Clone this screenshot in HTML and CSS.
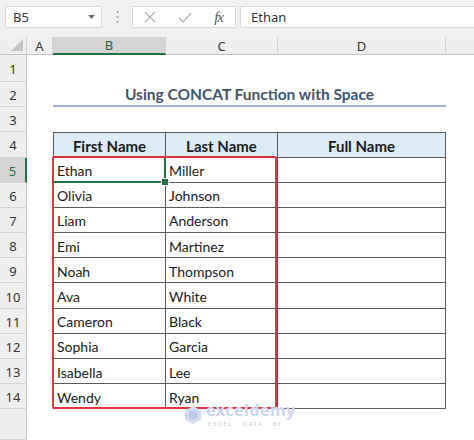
FILE: index.html
```html
<!DOCTYPE html>
<html lang="en">

<head>
    <meta charset="UTF-8">
    <meta name="viewport" content="width=device-width, initial-scale=1.0">
    <title>Using CONCAT Function with Space</title>
    <link rel="stylesheet" href="styles.css">
</head>

<body>
    <div class="toolbar">
        <div class="name-box">
            <span>B5</span>
            <svg class="caret" width="7" height="4" viewBox="0 0 7 4"><path d="M0 0h7L3.5 4z" fill="#6b6b6b"/></svg>
        </div>
        <div class="grip">
            <svg width="3" height="14" viewBox="0 0 3 14">
                <circle cx="1.5" cy="2" r="1" fill="#9a9a9a"/>
                <circle cx="1.5" cy="7" r="1" fill="#9a9a9a"/>
                <circle cx="1.5" cy="12" r="1" fill="#9a9a9a"/>
            </svg>
        </div>
        <div class="fx-box">
            <svg width="12" height="12" viewBox="0 0 12 12"><path d="M1 1l10 10M11 1L1 11" stroke="#b3b3b3" stroke-width="1.2" fill="none"/></svg>
            <svg width="14" height="11" viewBox="0 0 14 11"><path d="M1 6l4 4 8-9" stroke="#b3b3b3" stroke-width="1.3" fill="none"/></svg>
            <span class="fx">fx</span>
        </div>
        <div class="formula">Ethan</div>
    </div>

    <div class="sheet">
        <!-- column headers -->
        <div class="corner">
            <svg width="12" height="12" viewBox="0 0 12 12"><path d="M12 0v12H0z" fill="#c3c3c3"/></svg>
        </div>
        <div class="col-head">A</div>
        <div class="col-head active">B</div>
        <div class="col-head">C</div>
        <div class="col-head">D</div>
        <div class="col-head last"></div>

        <!-- row 1 -->
        <div class="row-head">1</div>
        <div class="blank wide"></div>

        <!-- row 2 -->
        <div class="row-head">2</div>
        <div class="blank"></div>
        <div class="title">Using CONCAT Function with Space</div>
        <div class="blank"></div>

        <!-- row 3 -->
        <div class="row-head">3</div>
        <div class="blank wide"></div>

        <!-- row 4 -->
        <div class="row-head">4</div>
        <div class="blank"></div>
        <div class="cell head first">First Name</div>
        <div class="cell head">Last Name</div>
        <div class="cell head">Full Name</div>
        <div class="blank"></div>

        <div class="row-head active">5</div>
        <div class="blank"></div>
        <div class="cell first selected">Ethan</div>
        <div class="cell">Miller</div>
        <div class="cell"></div>
        <div class="blank"></div>

        <div class="row-head">6</div>
        <div class="blank"></div>
        <div class="cell first">Olivia</div>
        <div class="cell">Johnson</div>
        <div class="cell"></div>
        <div class="blank"></div>

        <div class="row-head">7</div>
        <div class="blank"></div>
        <div class="cell first">Liam</div>
        <div class="cell">Anderson</div>
        <div class="cell"></div>
        <div class="blank"></div>

        <div class="row-head">8</div>
        <div class="blank"></div>
        <div class="cell first">Emi</div>
        <div class="cell">Martinez</div>
        <div class="cell"></div>
        <div class="blank"></div>

        <div class="row-head">9</div>
        <div class="blank"></div>
        <div class="cell first">Noah</div>
        <div class="cell">Thompson</div>
        <div class="cell"></div>
        <div class="blank"></div>

        <div class="row-head">10</div>
        <div class="blank"></div>
        <div class="cell first">Ava</div>
        <div class="cell">White</div>
        <div class="cell"></div>
        <div class="blank"></div>

        <div class="row-head">11</div>
        <div class="blank"></div>
        <div class="cell first">Cameron</div>
        <div class="cell">Black</div>
        <div class="cell"></div>
        <div class="blank"></div>

        <div class="row-head">12</div>
        <div class="blank"></div>
        <div class="cell first">Sophia</div>
        <div class="cell">Garcia</div>
        <div class="cell"></div>
        <div class="blank"></div>

        <div class="row-head">13</div>
        <div class="blank"></div>
        <div class="cell first">Isabella</div>
        <div class="cell">Lee</div>
        <div class="cell"></div>
        <div class="blank"></div>

        <div class="row-head">14</div>
        <div class="blank"></div>
        <div class="cell first">Wendy</div>
        <div class="cell">Ryan</div>
        <div class="cell"></div>
        <div class="blank"></div>

        <div class="row-head"></div>
        <div class="blank wide"></div>

        <!-- red frame over B5:C14 -->
        <div class="highlight"></div>

        <div class="watermark">
            <svg width="20" height="20" viewBox="0 0 20 20">
                <path d="M10 1l8 4.5v9L10 19l-8-4.5v-9z" fill="#d3dbef"/>
                <path d="M10 5l4.5 2.5v5L10 15l-4.5-2.5v-5z" fill="#bcc8e6"/>
            </svg>
            <div class="wm-text">
                <div class="wm-name">exceldemy</div>
                <div class="wm-sub">EXCEL · DATA · BI</div>
            </div>
        </div>
    </div>
</body>

</html>
```

FILE: styles.css
```css
* {
    margin: 0;
    padding: 0;
    box-sizing: border-box;
}

body {
    width: 474px;
    height: 440px;
    overflow: hidden;
    background-color: #fff;
    font-family: 'Lato', 'Noto Sans', sans-serif;
    color: #222;
}

/* formula bar */
.toolbar {
    display: flex;
    align-items: center;
    height: 37px;
    padding: 6px 0 9px 5px;
    background-color: #f1f1f1;
}

.name-box {
    width: 97px;
    height: 22px;
    display: flex;
    align-items: center;
    justify-content: space-between;
    padding: 0 6px 0 7px;
    background-color: #fff;
    border: 1px solid #dadada;
    font-family: 'Noto Sans', sans-serif;
    font-size: 13px;
    color: #333;
}

.grip {
    width: 30px;
    display: flex;
    justify-content: center;
}

.fx-box {
    width: 104px;
    height: 22px;
    display: flex;
    align-items: center;
    justify-content: space-between;
    padding: 0 12px 0 11px;
    background-color: #fff;
    border: 1px solid #dadada;
}

.fx {
    font-family: 'Liberation Serif', serif;
    font-style: italic;
    font-size: 15px;
    color: #555;
    letter-spacing: -1px;
}

.formula {
    flex: 1;
    height: 22px;
    margin-left: 4px;
    padding-left: 10px;
    background-color: #fff;
    border: 1px solid #dadada;
    border-right: none;
    font-family: 'Noto Sans', sans-serif;
    font-size: 13px;
    line-height: 20px;
    color: #333;
}

/* worksheet */
.sheet {
    position: relative;
    display: grid;
    grid-template-columns: 27px 26px 113px 112px 168px 1fr;
    grid-template-rows: 18px 26.5px 25px 25.5px 25.5px repeat(10, 25.2px) 1fr;
    height: 403px;
}

.corner {
    display: flex;
    align-items: flex-end;
    justify-content: flex-end;
    padding: 0 3px 3px 0;
    background-color: #efefef;
    border-right: 1px solid #cfcfcf;
    border-bottom: 1px solid #c4c4c4;
}

.col-head {
    display: flex;
    align-items: center;
    justify-content: center;
    background-color: #efefef;
    border-right: 1px solid #d2d2d2;
    border-bottom: 1px solid #c4c4c4;
    font-family: 'Noto Sans', sans-serif;
    font-size: 13px;
    color: #333;
}

.col-head.active {
    background-color: #d4d4d4;
    border-bottom: 2px solid #217346;
    color: #2d5f3f;
}

.col-head.last {
    border-right: none;
}

.row-head {
    display: flex;
    align-items: center;
    justify-content: center;
    padding-top: 2px;
    background-color: #efefef;
    border-right: 1px solid #c4c4c4;
    border-bottom: 1px solid #d6d6d6;
    font-family: 'Noto Sans', sans-serif;
    font-size: 13px;
    color: #333;
}

.row-head.active {
    background-color: #d4d4d4;
    border-right: 2px solid #217346;
    color: #217346;
}

.blank.wide {
    grid-column: span 5;
}

.title {
    grid-column: span 3;
    display: flex;
    align-items: center;
    justify-content: center;
    padding-top: 2px;
    border-bottom: 2px solid #9bb3d9;
    font-size: 15.5px;
    font-weight: 700;
    color: #44546a;
}

.cell {
    display: flex;
    align-items: center;
    padding: 2px 3px 0;
    border-right: 1px solid #5a5a5a;
    border-bottom: 1px solid #5a5a5a;
    font-size: 14px;
    color: #1a1a1a;
}

.cell.first {
    border-left: 1px solid #5a5a5a;
}

.cell.head {
    justify-content: center;
    border-top: 1px solid #5a5a5a;
    background-color: #ddebf7;
    font-weight: 700;
    font-size: 15px;
}

/* active cell outline, only its right and bottom edges show past the red frame */
.cell.selected {
    position: relative;
}

.cell.selected::after {
    content: "";
    position: absolute;
    top: 0;
    left: 0;
    right: -1px;
    bottom: -1px;
    border-right: 2px solid #217346;
    border-bottom: 2px solid #217346;
}

.cell.selected::before {
    content: "";
    position: absolute;
    right: -4px;
    bottom: -4px;
    width: 6px;
    height: 6px;
    background-color: #217346;
    border: 1px solid #fff;
    z-index: 1;
}

.highlight {
    position: absolute;
    left: 52px;
    top: 119px;
    width: 225px;
    height: 253px;
    border: 2px solid #dc363c;
    border-radius: 2px;
}

.watermark {
    position: absolute;
    left: 183px;
    top: 365px;
    display: flex;
    align-items: center;
    gap: 3px;
}

.wm-text {
    display: flex;
    flex-direction: column;
    gap: 3px;
}

.wm-name {
    font-family: 'Noto Sans', sans-serif;
    font-size: 16px;
    font-weight: 700;
    line-height: 16px;
    color: #cdd6ee;
    letter-spacing: 0.5px;
}

.wm-sub {
    font-family: 'Noto Sans', sans-serif;
    font-size: 6px;
    line-height: 7px;
    letter-spacing: 1.6px;
    color: #c6cbd6;
    padding-left: 2px;
}
```
